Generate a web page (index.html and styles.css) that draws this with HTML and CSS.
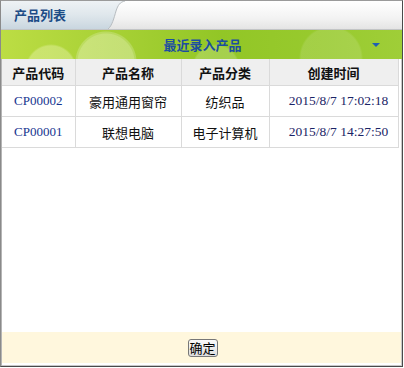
FILE: index.html
```html
<!DOCTYPE html>
<html>
<head>
<meta charset="utf-8">
<link rel="stylesheet" href="styles.css">
</head>
<body>
<div class="win">
  <div class="tabbar">
    <div class="tab">产品列表</div>
    <svg class="tab-curve" width="22" height="28" viewBox="0 0 22 28">
      <defs>
        <linearGradient id="tg" x1="0" y1="0" x2="0" y2="1">
          <stop offset="0" stop-color="#eef2f5"/>
          <stop offset="0.5" stop-color="#dfe7ec"/>
          <stop offset="1" stop-color="#c9d6df"/>
        </linearGradient>
      </defs>
      <path d="M0 0 H17 C12 1 10 4 8 10 C6 17 4 25 0 28 Z" fill="url(#tg)"/>
      <path d="M17 0 C12 1 10 4 8 10 C6 17 4 25 0 28" fill="none" stroke="#b7bcc0" stroke-width="1"/>
    </svg>
    <div class="tab-rest"></div>
  </div>
  <div class="panel-head">
    <span class="panel-title">最近录入产品</span>
    <span class="arrow"></span>
  </div>
  <table class="grid">
    <colgroup>
      <col class="c1"><col class="c2"><col class="c3"><col class="c4">
    </colgroup>
    <thead>
      <tr><th>产品代码</th><th>产品名称</th><th>产品分类</th><th>创建时间</th></tr>
    </thead>
    <tbody>
      <tr><td class="code">CP00002</td><td>豪用通用窗帘</td><td>纺织品</td><td class="date">2015/8/7 17:02:18</td></tr>
      <tr><td class="code">CP00001</td><td>联想电脑</td><td>电子计算机</td><td class="date">2015/8/7 14:27:50</td></tr>
    </tbody>
  </table>
  <div class="fill"></div>
  <div class="footer"><button class="btn">确定</button></div>
</div>
</body>
</html>
```

FILE: styles.css
```css
html, body {
  margin: 0;
  padding: 0;
  background: #fff;
}
.win {
  width: 403px;
  height: 367px;
  box-sizing: border-box;
  border: 1px solid #4a4a4a;
  border-left-color: #8a8a8a;
  border-top-color: #9a9a9a;
  box-shadow: inset 1px 0 0 #b5b5b5, inset -1px -1px 0 #c8c8c8;
  display: flex;
  flex-direction: column;
  font-family: "Noto Sans CJK SC", "Noto Sans", sans-serif;
  overflow: hidden;
}
.tabbar {
  height: 28px;
  display: flex;
  border-bottom: 1px solid #c2c4c5;
  background: linear-gradient(#ffffff, #f3f3f3 60%, #e4e4e4);
}
.tab {
  width: 107px;
  height: 28px;
  box-sizing: border-box;
  padding-left: 13px;
  line-height: 27px;
  font-size: 13px;
  font-weight: bold;
  color: #1d4c86;
  background: linear-gradient(#eef2f5, #dfe7ec 50%, #c9d6df);
}
.tab-curve {
  display: block;
  flex: none;
}
.tab-rest {
  flex: 1;
}
.panel-head {
  height: 29px;
  position: relative;
  display: flex;
  align-items: center;
  justify-content: center;
  background:
    radial-gradient(circle at 105px 32px, rgba(255,255,240,0.35) 0 28px, rgba(255,255,255,0.2) 29px 30px, transparent 31px),
    radial-gradient(circle at 50px 40px, rgba(255,255,220,0.3) 0 24px, transparent 26px),
    radial-gradient(circle at 215px 38px, rgba(255,255,255,0.18) 0 22px, transparent 24px),
    radial-gradient(circle at 330px 28px, rgba(255,255,255,0.12) 0 30px, transparent 32px),
    linear-gradient(90deg, #bcdd44 0%, #a6d034 30%, #92c626 55%, #98ca2e 80%, #9fce38 100%);
}
.panel-title {
  font-size: 13px;
  font-weight: bold;
  color: #1c4ea0;
  margin-left: 2px;
}
.arrow {
  position: absolute;
  right: 22px;
  top: 13px;
  width: 0;
  height: 0;
  border-left: 4px solid transparent;
  border-right: 4px solid transparent;
  border-top: 4px solid #1f5fb2;
}
.grid {
  width: 396px;
  margin-left: 1px;
  border-collapse: collapse;
  table-layout: fixed;
  font-size: 13px;
}
.c1 { width: 73px; }
.c2 { width: 106px; }
.c3 { width: 88px; }
.c4 { width: 129px; }
.grid th {
  height: 26px;
  background: #efefef;
  border: 1px solid #dadada;
  border-top: none;
  font-weight: bold;
  color: #111;
  padding: 0;
  text-align: center;
}
.grid td {
  height: 30px;
  border: 1px solid #dadada;
  padding: 0;
  text-align: center;
  color: #111;
}
.grid th:first-child, .grid td:first-child { border-left: none; }
.grid td.code {
  font-family: "Liberation Serif", serif;
  font-size: 13px;
  color: #16358f;
}
.grid td.date {
  font-family: "Liberation Serif", serif;
  font-size: 13.5px;
  color: #1a2466;
  padding-left: 10px;
}
.fill {
  flex: 1;
}
.footer {
  height: 31px;
  margin: 0 1px 3px 1px;
  background: #fff7dd;
  display: flex;
  align-items: center;
  justify-content: center;
}
.btn {
  width: 30px;
  height: 18px;
  padding: 0;
  margin-left: 2px;
  font-family: "Noto Sans CJK SC", sans-serif;
  font-size: 13px;
  line-height: 14px;
  color: #000;
  border: 1px solid #777;
  border-radius: 3px;
  background: linear-gradient(#fafafa, #dedede);
}
```
